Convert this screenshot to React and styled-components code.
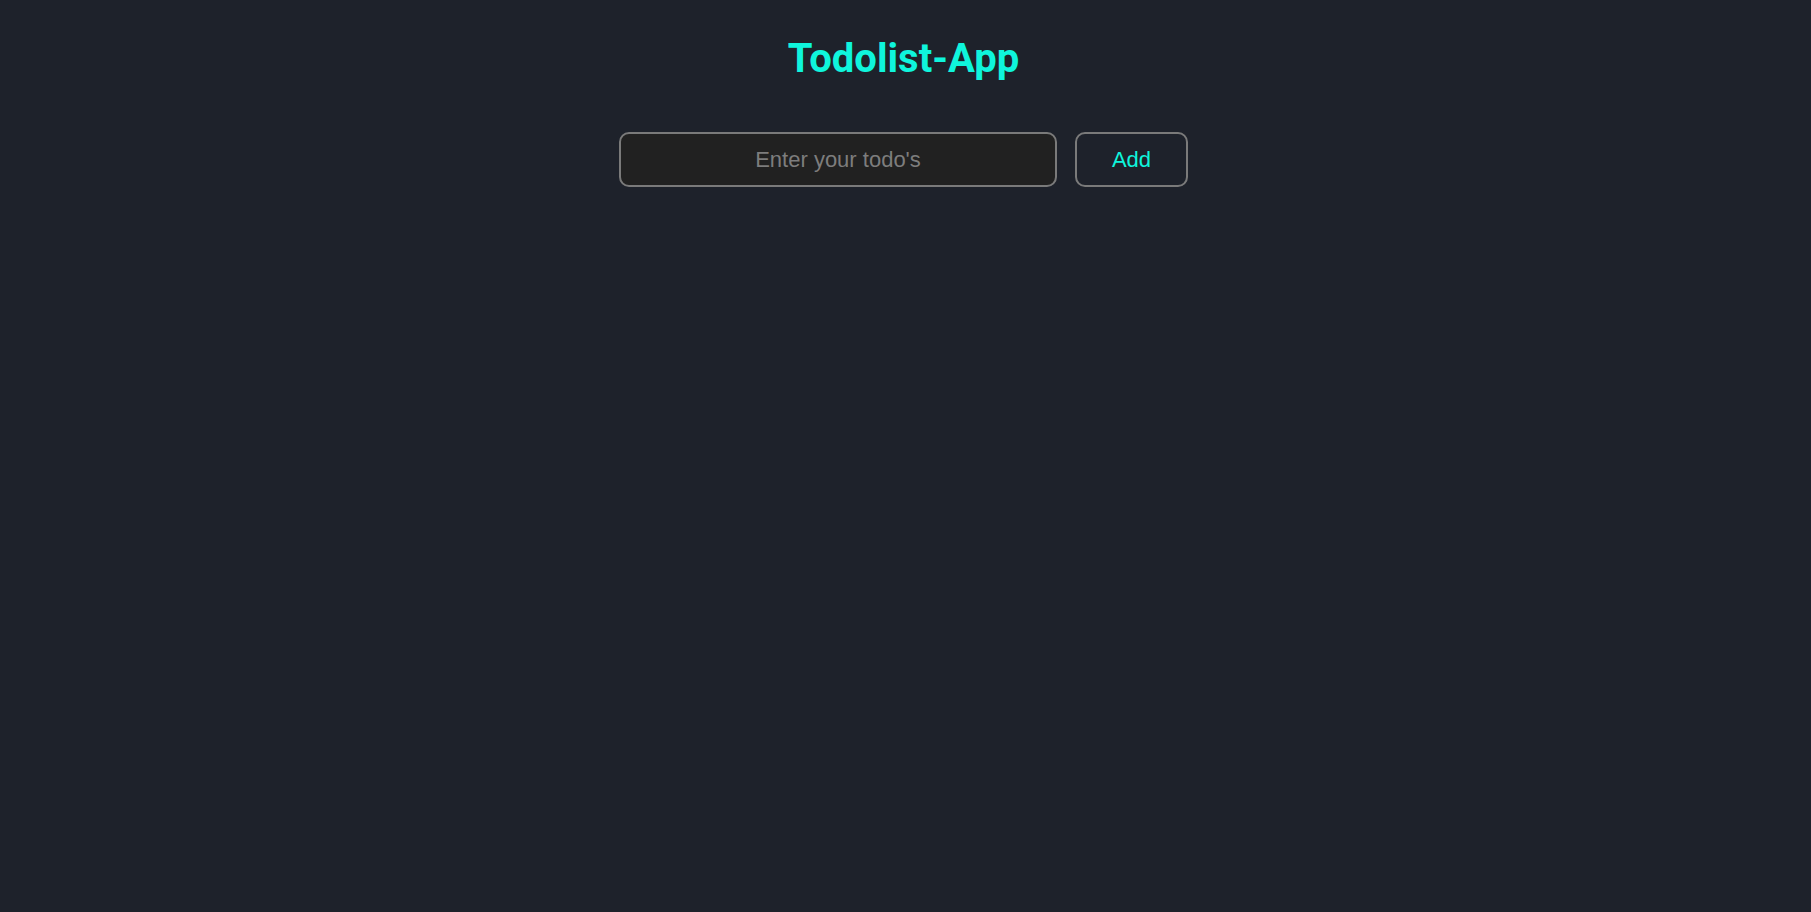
import React, { useState } from "react";
import styled, { createGlobalStyle } from "styled-components";

const GlobalStyle = createGlobalStyle`
  html, body {
    margin: 0;
    padding: 0;
    background: #1e222b;
    min-height: 100%;
  }
  body {
    font-family: "Liberation Sans", Arial, sans-serif;
  }
`;

const Page = styled.div`
  min-height: 912px;
  background: #1e222b;
  display: flex;
  flex-direction: column;
  align-items: center;
  padding-right: 4px;
  box-sizing: border-box;
`;

const Title = styled.h1`
  margin: 35px 0 0;
  font-family: Roboto, "Liberation Sans", sans-serif;
  font-weight: 700;
  font-size: 40px;
  line-height: 47px;
  color: #0ff5dc;
`;

const Form = styled.form`
  display: flex;
  align-items: center;
  gap: 18px;
  margin-top: 50px;
`;

const Input = styled.input`
  box-sizing: border-box;
  width: 438px;
  height: 55px;
  background: #212121;
  border: 2px solid #7a7a7a;
  border-radius: 10px;
  color: #e0e0e0;
  font-family: "Liberation Sans", Arial, sans-serif;
  font-size: 22px;
  text-align: center;
  outline: none;
  &::placeholder {
    color: #7d7d7d;
  }
`;

const AddButton = styled.button`
  box-sizing: border-box;
  width: 113px;
  height: 55px;
  background: transparent;
  border: 2px solid #7a7a7a;
  border-radius: 10px;
  color: #0ff5dc;
  font-family: "Liberation Sans", Arial, sans-serif;
  font-size: 22px;
  cursor: pointer;
`;

export default function App() {
  const [value, setValue] = useState("");
  return (
    <>
      <GlobalStyle />
      <Page>
        <Title>Todolist-App</Title>
        <Form onSubmit={(e) => e.preventDefault()}>
          <Input
            placeholder="Enter your todo's"
            value={value}
            onChange={(e) => setValue(e.target.value)}
          />
          <AddButton type="submit">Add</AddButton>
        </Form>
      </Page>
    </>
  );
}
